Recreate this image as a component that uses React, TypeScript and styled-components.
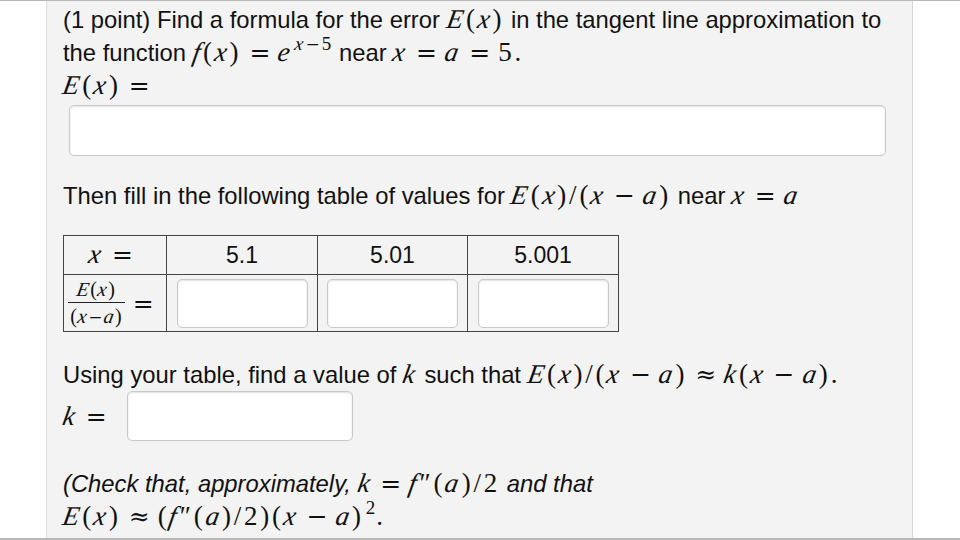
import React from "react";
import styled, { createGlobalStyle } from "styled-components";

const GlobalStyle = createGlobalStyle`
  html, body { margin: 0; padding: 0; background: #ffffff; }
  body { font-family: "Liberation Sans", Arial, sans-serif; color: #111; }
`;

const Page = styled.div`
  width: 960px;
  height: 540px;
  box-sizing: border-box;
  border-top: 1px solid #b8b8b8;
  border-bottom: 2px solid #b8b8b8;
  display: flex;
  overflow: hidden;
`;

const Panel = styled.div`
  margin-left: 46px;
  width: 867px;
  box-sizing: border-box;
  background: #f3f3f3;
  border-left: 1px solid #dedede;
  border-right: 1px solid #d6d6d6;
  padding: 2px 0 0 16px;
  font-size: 23.8px;
  line-height: 33px;
`;

const Line = styled.div<{ $mt?: number; $italic?: boolean }>`
  margin-top: ${(p) => p.$mt ?? 0}px;
  height: 33px;
  white-space: nowrap;
  font-style: ${(p) => (p.$italic ? "italic" : "normal")};
`;

const MathSpan = styled.span`
  font-family: "Liberation Serif", "Times New Roman", serif;
  font-size: 27px;
  line-height: 1;
  letter-spacing: 2.8px;
  font-style: normal;
`;

const Var = styled.var`
  display: inline-block;
  font-family: "Liberation Serif", "Times New Roman", serif;
  font-style: italic;
  transform: skewX(-10deg);
`;

const Op = styled.span`
  font-family: "DejaVu Serif", serif;
  font-size: 25px;
  font-style: normal;
  letter-spacing: 0;
  margin: 0 8px;
`;

const Sup = styled.sup`
  font-size: 19px;
  line-height: 1;
  letter-spacing: 1px;
  vertical-align: 0;
  position: relative;
  top: -11px;
  margin-left: 2px;
`;

const SupOp = styled.span`
  font-family: "DejaVu Serif", serif;
  font-size: 17px;
  margin: 0 1px;
`;

const AnswerBox = styled.div<{ $w: number; $h: number; $ml?: number }>`
  width: ${(p) => p.$w}px;
  height: ${(p) => p.$h}px;
  margin-left: ${(p) => p.$ml ?? 0}px;
  box-sizing: border-box;
  background: #ffffff;
  border: 1px solid #c9c9c9;
  border-radius: 5px;
  box-shadow: inset 0 1px 2px rgba(0, 0, 0, 0.12);
`;

const BigBoxWrap = styled.div`
  margin: 3px 0 0 6px;
`;

const Table = styled.table`
  margin-top: 23px;
  width: 556px;
  table-layout: fixed;
  border-collapse: collapse;
  font-size: 23px;
`;

const Col = styled.col<{ $w: number }>`
  width: ${(p) => p.$w}px;
`;

const HeadCell = styled.td`
  height: 38px;
  padding: 0;
  border: 1.5px solid #444;
  text-align: center;
  vertical-align: middle;
  line-height: 38px;
`;

const BodyCell = styled.td`
  height: 56px;
  padding: 0;
  border: 1.5px solid #444;
  vertical-align: middle;
`;

const CellInner = styled.div`
  display: flex;
  justify-content: center;
  align-items: center;
`;

const FracRow = styled.div`
  display: flex;
  align-items: center;
  justify-content: center;
`;

const Frac = styled.span`
  display: inline-flex;
  flex-direction: column;
  align-items: center;
  font-family: "Liberation Serif", "Times New Roman", serif;
  font-size: 20px;
  letter-spacing: 1.2px;
  line-height: 24px;
`;

const FracTop = styled.span`
  align-self: stretch;
  text-align: center;
  padding: 0 2px 1px;
  border-bottom: 1.5px solid #222;
`;

const FracBot = styled.span`
  padding: 1px 2px 0;
`;

const FracOp = styled.span`
  font-family: "DejaVu Serif", serif;
  font-size: 17px;
`;

const KRow = styled.div`
  display: flex;
  align-items: center;
  height: 50px;
`;

export default function App() {
  return (
    <Page>
      <GlobalStyle />
      <Panel>
        <Line>
          (1 point) Find a formula for the error{" "}
          <MathSpan>
            <Var>E</Var>(<Var>x</Var>)
          </MathSpan>{" "}
          in the tangent line approximation to
        </Line>
        <Line>
          the function{" "}
          <MathSpan>
            <Var>f</Var>(<Var>x</Var>)<Op>=</Op>
            <Var>e</Var>
            <Sup>
              <Var>x</Var>
              <SupOp>−</SupOp>5
            </Sup>
          </MathSpan>{" "}
          near{" "}
          <MathSpan>
            <Var>x</Var>
            <Op>=</Op>
            <Var>a</Var>
            <Op>=</Op>5.
          </MathSpan>
        </Line>
        <Line>
          <MathSpan>
            <Var>E</Var>(<Var>x</Var>)<Op>=</Op>
          </MathSpan>
        </Line>
        <BigBoxWrap>
          <AnswerBox $w={817} $h={51} />
        </BigBoxWrap>
        <Line $mt={23}>
          Then fill in the following table of values for{" "}
          <MathSpan>
            <Var>E</Var>(<Var>x</Var>)/(<Var>x</Var>
            <Op>−</Op>
            <Var>a</Var>)
          </MathSpan>{" "}
          near{" "}
          <MathSpan>
            <Var>x</Var>
            <Op>=</Op>
            <Var>a</Var>
          </MathSpan>
        </Line>
        <Table>
          <colgroup>
            <Col $w={103} />
            <Col $w={151} />
            <Col $w={150} />
            <Col $w={151} />
          </colgroup>
          <tbody>
            <tr>
              <HeadCell>
                <MathSpan>
                  <Var>x</Var>
                  <Op>=</Op>
                </MathSpan>
              </HeadCell>
              <HeadCell>5.1</HeadCell>
              <HeadCell>5.01</HeadCell>
              <HeadCell>5.001</HeadCell>
            </tr>
            <tr>
              <BodyCell>
                <FracRow>
                  <Frac>
                    <FracTop>
                      <Var>E</Var>(<Var>x</Var>)
                    </FracTop>
                    <FracBot>
                      (<Var>x</Var>
                      <FracOp>−</FracOp>
                      <Var>a</Var>)
                    </FracBot>
                  </Frac>
                  <MathSpan>
                    <Op>=</Op>
                  </MathSpan>
                </FracRow>
              </BodyCell>
              <BodyCell>
                <CellInner>
                  <AnswerBox $w={131} $h={49} />
                </CellInner>
              </BodyCell>
              <BodyCell>
                <CellInner>
                  <AnswerBox $w={131} $h={49} />
                </CellInner>
              </BodyCell>
              <BodyCell>
                <CellInner>
                  <AnswerBox $w={131} $h={49} />
                </CellInner>
              </BodyCell>
            </tr>
          </tbody>
        </Table>
        <Line $mt={26}>
          Using your table, find a value of{" "}
          <MathSpan>
            <Var>k</Var>
          </MathSpan>{" "}
          such that{" "}
          <MathSpan>
            <Var>E</Var>(<Var>x</Var>)/(<Var>x</Var>
            <Op>−</Op>
            <Var>a</Var>)<Op>≈</Op>
            <Var>k</Var>(<Var>x</Var>
            <Op>−</Op>
            <Var>a</Var>).
          </MathSpan>
        </Line>
        <KRow>
          <MathSpan>
            <Var>k</Var>
            <Op>=</Op>
          </MathSpan>
          <AnswerBox $w={226} $h={50} $ml={12} />
        </KRow>
        <Line $mt={26} $italic>
          (Check that, approximately,{" "}
          <MathSpan>
            <Var>k</Var>
            <Op>=</Op>
            <Var>f</Var>″(<Var>a</Var>)/2
          </MathSpan>{" "}
          and that
        </Line>
        <Line>
          <MathSpan>
            <Var>E</Var>(<Var>x</Var>)<Op>≈</Op>(<Var>f</Var>″(<Var>a</Var>)/2)(<Var>x</Var>
            <Op>−</Op>
            <Var>a</Var>)<Sup>2</Sup>.
          </MathSpan>
        </Line>
      </Panel>
    </Page>
  );
}
